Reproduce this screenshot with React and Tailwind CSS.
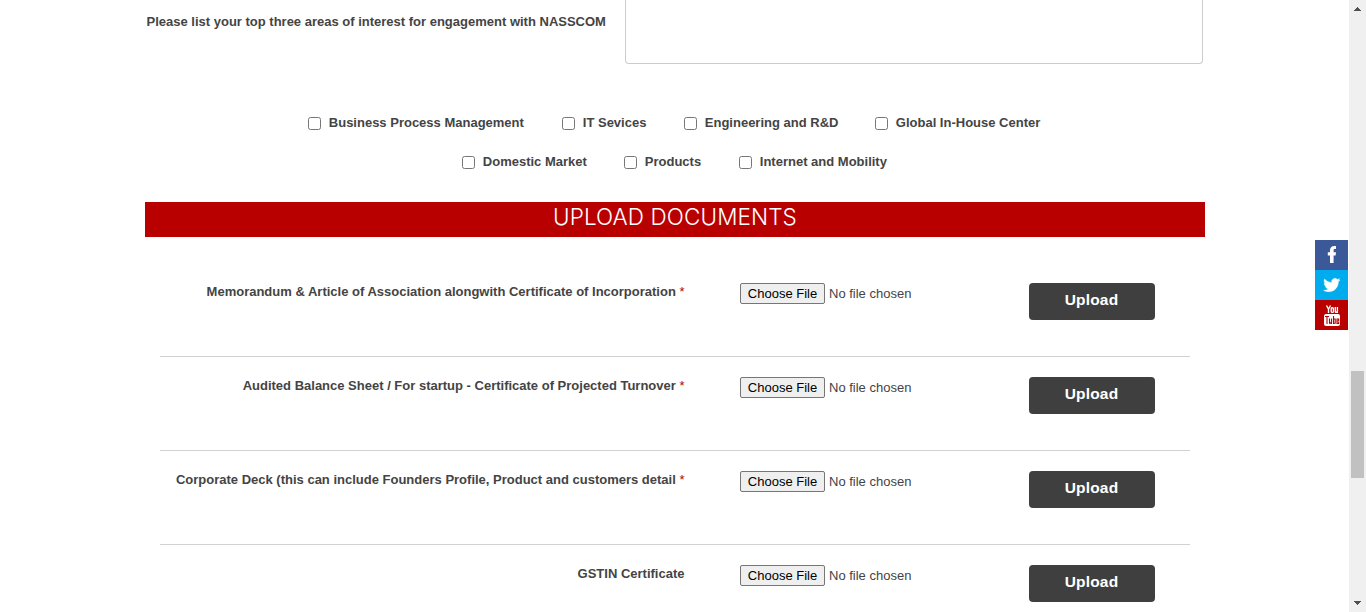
const firstAreas = [
  ["Business Process Management", "w-[254px]"],
  ["IT Sevices", "w-[122px]"],
  ["Engineering and R&D", "w-[191px]"],
  ["Global In-House Center", "w-[167px]"],
];
const secondAreas = [
  ["Domestic Market", "w-[162px]"],
  ["Products", "w-[115px]"],
  ["Internet and Mobility", "w-[150px]"],
];
const documents = [
  ["Memorandum & Article of Association alongwith Certificate of Incorporation", true],
  ["Audited Balance Sheet / For startup - Certificate of Projected Turnover", true],
  ["Corporate Deck (this can include Founders Profile, Product and customers detail", true],
  ["GSTIN Certificate", false],
];

function Areas({ items }) {
  return items.map(([label, width]) => (
    <label key={label} className={`flex shrink-0 whitespace-nowrap ${width}`}>
      <input type="checkbox" className="mt-[3px] mr-[7.8px] size-[13px] shrink-0 appearance-none rounded-[2.5px] border border-[#767676] bg-white" />
      {label}
    </label>
  ));
}

function DocumentRow({ label, required }) {
  return (
    <div className="mx-[15px] flex h-[94px] shrink-0 items-start border-b border-[#d2d2d2] pt-5">
      <div className="w-[525px] pr-[0.5px] text-right leading-[18px] whitespace-nowrap">
        {label}
        {required && <span className="font-normal text-[#b90000]"> *</span>}
      </div>
      <div className="ml-[55px] flex w-[289px] items-center font-normal">
        <button className="h-[21px] w-[85px] rounded-[2px] border border-[#767676] bg-[#efefef] leading-[19px] text-black">Choose File</button>
        <span className="ml-1">No file chosen</span>
      </div>
      <button className="h-[37px] w-[126px] rounded-[4px] bg-[#3f3f3f] pr-px pb-[3px] text-[15.5px] tracking-[0.2px] text-white">Upload</button>
    </div>
  );
}

export default function App() {
  return (
    <div className="flex h-[612px] w-[1366px] overflow-hidden bg-white font-['Liberation_Sans',Arial,sans-serif] text-[13px] leading-[18px] font-bold text-[#444]">
      <main className="ml-[145px] flex w-[1060px] shrink-0 flex-col">
        <div className="flex h-[64px] shrink-0">
          <div className="w-[480px] pt-[13px] pl-[1.5px] whitespace-nowrap">Please list your top three areas of interest for engagement with NASSCOM</div>
          <div className="h-[64px] w-[578px] rounded-b-[4px] border border-t-0 border-[#ccc]" />
        </div>
        <div className="mt-[50px] ml-[163px] flex h-[39px] shrink-0"><Areas items={firstAreas} /></div>
        <div className="ml-[317px] flex h-[49px] shrink-0"><Areas items={secondAreas} /></div>
        <h1 className="h-[35px] shrink-0 bg-[#b90000] text-center font-['Inter','Liberation_Sans',sans-serif] text-[22.5px] leading-[29px] font-light tracking-[0.1px] text-white">UPLOAD DOCUMENTS</h1>
        <section className="flex flex-col pt-[26px]">
          {documents.map(([label, required]) => <DocumentRow key={label} label={label} required={required} />)}
        </section>
      </main>
      <aside className="mt-[240px] ml-auto flex w-[33px] shrink-0 flex-col">
        <a className="flex h-[30px] bg-[#3b5998]">
          <svg width="33" height="30" viewBox="0 0 33 30" fill="white"><path d="M15 23V15.6H12.8V12.2H15V10.5C15 7.5 16.6 6 19.2 6H21V9.1H19.8C18.9 9.1 18.6 9.6 18.6 10.5V12.2H21L20.6 15.6H18.6V23Z" /></svg>
        </a>
        <a className="flex h-[30px] bg-[#00aced]">
          <svg width="33" height="30" viewBox="0 0 33 30"><path transform="translate(8.5 6.8) scale(.69 .69)" fill="white" stroke="white" strokeWidth=".5" d="M23.95 4.57a10 10 0 0 1-2.82.77 5 5 0 0 0 2.16-2.72 9.9 9.9 0 0 1-3.13 1.18 4.92 4.92 0 0 0-8.38 4.48A14 14 0 0 1 1.64 3.16a4.92 4.92 0 0 0 1.52 6.57 4.9 4.9 0 0 1-2.23-.61v.06a4.92 4.92 0 0 0 3.95 4.83 5 5 0 0 1-2.21.08 4.94 4.94 0 0 0 4.6 3.42A9.87 9.87 0 0 1 0 19.54a14 14 0 0 0 7.55 2.21c9.14 0 14.31-7.72 14.01-14.64a10 10 0 0 0 2.39-2.54Z" /></svg>
        </a>
        <a className="flex h-[30px] bg-[#b90000]">
          <svg width="33" height="30" viewBox="0 0 33 30" fill="none" stroke="white" strokeWidth="1.35">
            <path d="M11.5 5.5L13.5 9.2V13M15.5 5.5L13.5 9.2" />
            <rect x="16.2" y="7.7" width="2.2" height="4.7" rx="1" />
            <path d="M20.3 7V11.8Q20.3 12.5 21 12.3L22.2 11.5M22.4 7V13" />
            <rect x="9" y="14" width="16" height="12" rx="2" fill="white" stroke="none" />
            <g stroke="#b90000" strokeWidth="1.1"><path d="M10 16.5H14M12 16.5V24M14.5 18.5V22.7Q14.5 23.5 15.2 23.3L16.2 22.5M16.5 18.5V24M18.5 16V24M18.5 19H20.2V23.3H18.5M23.7 22V23.4H22V19H23.7V21H22" /></g>
          </svg>
        </a>
      </aside>
      <div className="ml-px flex w-[17px] shrink-0 flex-col items-center bg-[#f0f0f0]">
        <svg width="17" height="17" shapeRendering="crispEdges" fill="#505050"><path d="M8 7h1v1h1v1h1v1h1v1H5v-1h1V9h1V8h1Z" /></svg>
        <div className="mt-[354px] h-[107px] w-[13px] bg-[#c1c1c1]" />
        <svg className="mt-auto" width="17" height="17" shapeRendering="crispEdges" fill="#505050"><path d="M5 6h7v1h-1v1h-1v1H9v1H8V9H7V8H6V7H5Z" /></svg>
      </div>
    </div>
  );
}
